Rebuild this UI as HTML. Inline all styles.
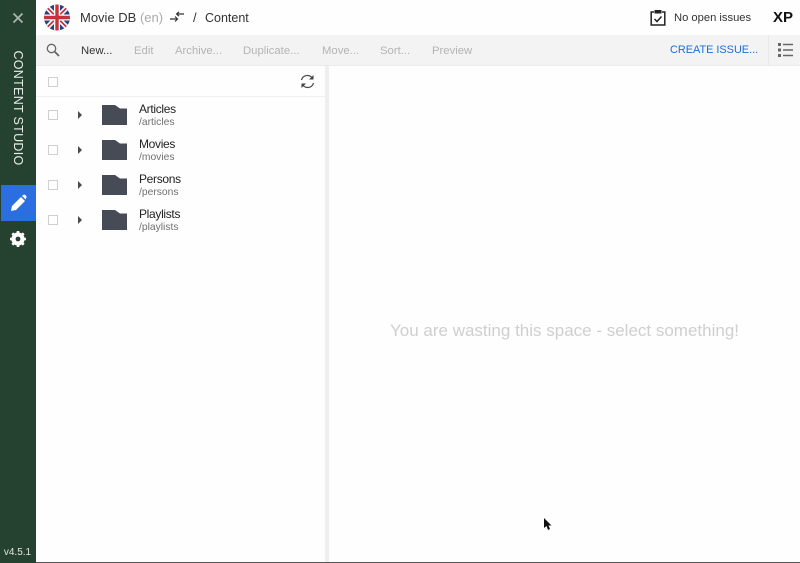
<!DOCTYPE html>
<html><head><meta charset="utf-8"><style>
html,body{margin:0;padding:0;width:800px;height:563px;overflow:hidden;background:#fefefe;font-family:"Liberation Sans",sans-serif}
.a{position:absolute;white-space:nowrap}
.t{font-size:11.3px;color:#b4b4b4;top:44px;line-height:14px}
.cb{position:absolute;left:48px;width:8px;height:8px;border:1px solid #cfcfcf;background:#fff}
.n{position:absolute;left:139px;font-size:12px;letter-spacing:-.32px;color:#222;line-height:14px}
.p{position:absolute;left:139px;font-size:10.3px;color:#707070;line-height:12px}
.ar{position:absolute;left:78px;width:0;height:0;border-left:4px solid #4a4a4a;border-top:4px solid transparent;border-bottom:4px solid transparent}
</style></head><body>
<div class="a" style="left:0;top:0;width:35.5px;height:563px;background:#25412f"></div>
<svg class="a" style="left:12px;top:12px" width="12" height="12"><path d="M1.5 1.5L10.5 10.5M10.5 1.5L1.5 10.5" stroke="#aab5ae" stroke-width="1.8"/></svg>
<div class="a" style="left:18px;top:108px;font-size:12.5px;color:#e8ece9;transform:translate(-50%,-50%) rotate(90deg);letter-spacing:.3px">CONTENT STUDIO</div>
<div class="a" style="left:1px;top:185px;width:34.5px;height:36px;background:#2a6ee0"></div>
<svg class="a" style="left:10px;top:194px" width="17" height="18" viewBox="0 0 17 18"><path d="M1 17L2 12L11 3L15 7L6 16Z M12 2L13.5 .8Q14.5 .3 15.5 1.2L16.3 2Q17 3 16 4.2L15.8 5.5Z" fill="#fff"/></svg>
<svg class="a" style="left:10px;top:231px" width="16" height="16" viewBox="0 0 16 16"><circle cx="8" cy="8" r="5" fill="none" stroke="#fff" stroke-width="3.2"/><path d="M8 0V16M0 8H16M2.3 2.3L13.7 13.7M13.7 2.3L2.3 13.7" stroke="#fff" stroke-width="2.6"/><circle cx="8" cy="8" r="2.4" fill="#25412f"/></svg>
<div class="a" style="left:0;top:546px;width:35px;text-align:center;font-size:10px;color:#dfe5e1;line-height:13px">v4.5.1</div>

<svg class="a" style="left:44px;top:4px" width="26" height="27" viewBox="0 0 26 26"><defs><clipPath id="c"><circle cx="13" cy="13" r="13"/></clipPath></defs><g clip-path="url(#c)"><rect width="26" height="26" fill="#2a4080"/><path d="M0 0L26 26M26 0L0 26" stroke="#fff" stroke-width="5"/><path d="M0 0L26 26M26 0L0 26" stroke="#c8303c" stroke-width="1.7"/><path d="M13 0V26M0 13H26" stroke="#fff" stroke-width="6"/><path d="M13 0V26M0 13H26" stroke="#c8303c" stroke-width="3.4"/></g></svg>
<div class="a" style="left:80px;top:10px;font-size:13px;line-height:16px;color:#333">Movie DB <span style="color:#aaa">(en)</span></div>
<svg class="a" style="left:169px;top:11px" width="16" height="12" viewBox="0 0 16 12"><path d="M1 8H8M6 5.5L8.5 8L6 10.5M15 3H8M10 .8L7.6 3L10 5.2" stroke="#333" stroke-width="1.2" fill="none"/></svg>
<div class="a" style="left:193px;top:10px;font-size:13px;line-height:16px;color:#333">/</div>
<div class="a" style="left:205px;top:10px;font-size:12.5px;line-height:16px;color:#333">Content</div>
<svg class="a" style="left:650px;top:9px" width="16" height="17" viewBox="0 0 16 17"><path d="M4 3H1.2V16H14.8V3H12" fill="none" stroke="#222" stroke-width="1.5"/><rect x="4.5" y="1" width="7" height="3.5" fill="#222"/><path d="M4.5 10L7 12.5L11.5 7.5" fill="none" stroke="#222" stroke-width="1.5"/></svg>
<div class="a" style="left:674px;top:10.5px;font-size:11.2px;line-height:15px;color:#333">No open issues</div>
<div class="a" style="left:773px;top:9px;font-size:15px;font-weight:bold;line-height:18px;color:#111">XP</div>

<div class="a" style="left:36px;top:35px;width:764px;height:30px;background:#f3f3f3"></div>
<div class="a" style="left:36px;top:65px;width:764px;height:1px;background:#ebebeb"></div>
<div class="a" style="left:768px;top:35px;width:1px;height:30px;background:#e8e8e8"></div>
<svg class="a" style="left:46px;top:43px" width="14" height="14" viewBox="0 0 14 14"><circle cx="5.5" cy="5.5" r="4.2" fill="none" stroke="#666" stroke-width="1.3"/><path d="M8.5 8.5L13 13" stroke="#666" stroke-width="1.8"/></svg>
<div class="a t" style="left:81px;color:#333">New...</div>
<div class="a t" style="left:134px">Edit</div>
<div class="a t" style="left:175px">Archive...</div>
<div class="a t" style="left:243px">Duplicate...</div>
<div class="a t" style="left:322px">Move...</div>
<div class="a t" style="left:380px">Sort...</div>
<div class="a t" style="left:432px">Preview</div>
<div class="a t" style="left:670px;top:43px;color:#1a6fd8;font-size:10.9px">CREATE ISSUE...</div>
<svg class="a" style="left:778px;top:43px" width="15" height="14" viewBox="0 0 15 14"><path d="M0 0h3v3H0zM0 5.5h3v3H0zM0 11h3v3H0z" fill="#666"/><path d="M5 .8h10v1.5H5zM5 6.3h10v1.5H5zM5 11.8h10v1.5H5z" fill="#666"/></svg>

<div class="a" style="left:325px;top:66px;width:4px;height:497px;background:#eeeeee"></div>
<div class="a" style="left:36px;top:96px;width:289px;height:1px;background:#f0f0f0"></div>
<div class="cb" style="top:77px"></div>
<svg class="a" style="left:300px;top:74px" width="15" height="15" viewBox="0 0 15 15"><path d="M1.5 6A6 6 0 0 1 12.5 4.5M13.5 9A6 6 0 0 1 2.5 10.5" fill="none" stroke="#444" stroke-width="1.2"/><path d="M13.5 1V5.5H9ZM1.5 14V9.5H6Z" fill="#444"/></svg>

<div class="cb" style="top:110px"></div><div class="ar" style="top:110.5px"></div>
<svg class="a" style="left:102px;top:105px" width="25" height="20"><path d="M0 0H13L18 3.5H25V20H0Z" fill="#474b55"/></svg>
<div class="n" style="top:102px">Articles</div><div class="p" style="top:117px">/articles</div>

<div class="cb" style="top:145px"></div><div class="ar" style="top:145.5px"></div>
<svg class="a" style="left:102px;top:140px" width="25" height="20"><path d="M0 0H13L18 3.5H25V20H0Z" fill="#474b55"/></svg>
<div class="n" style="top:137px">Movies</div><div class="p" style="top:152px">/movies</div>

<div class="cb" style="top:180px"></div><div class="ar" style="top:180.5px"></div>
<svg class="a" style="left:102px;top:175px" width="25" height="20"><path d="M0 0H13L18 3.5H25V20H0Z" fill="#474b55"/></svg>
<div class="n" style="top:172px">Persons</div><div class="p" style="top:187px">/persons</div>

<div class="cb" style="top:215px"></div><div class="ar" style="top:215.5px"></div>
<svg class="a" style="left:102px;top:210px" width="25" height="20"><path d="M0 0H13L18 3.5H25V20H0Z" fill="#474b55"/></svg>
<div class="n" style="top:207px">Playlists</div><div class="p" style="top:222px">/playlists</div>

<div class="a" style="left:390px;top:320px;font-size:17px;line-height:21px;color:#cfcfcf">You are wasting this space - select something!</div>
<svg class="a" style="left:543px;top:517px" width="10" height="15" viewBox="0 0 10 15"><path d="M1 1V11L3.5 9L5 13L7 12L5.5 8.5H8.5Z" fill="#111"/></svg>
<div class="a" style="left:36px;top:562px;width:764px;height:1px;background:#555"></div>
</body></html>
